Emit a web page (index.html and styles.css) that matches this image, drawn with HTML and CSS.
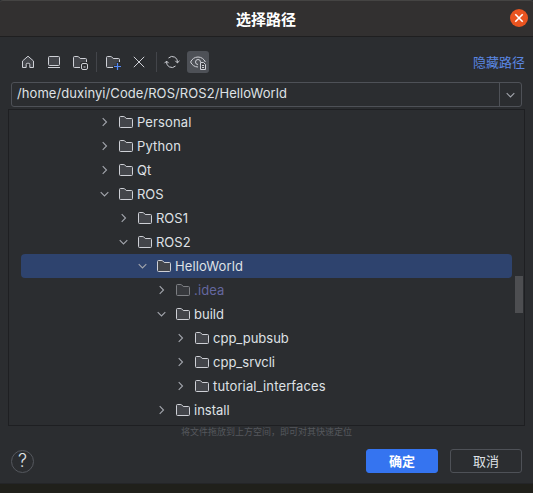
FILE: index.html
```html
<!DOCTYPE html>
<html lang="zh-CN">
<head>
<meta charset="utf-8">
<title>选择路径</title>
<link rel="stylesheet" href="styles.css">
</head>
<body>
<svg class="defs" width="0" height="0">
  <symbol id="folder" viewBox="0 0 16 16"><path class="body" d="M1.5 3.5a1 1 0 0 1 1-1h3.4a1 1 0 0 1 .75.34L8.2 4.5h5.3a1 1 0 0 1 1 1v7a1 1 0 0 1-1 1h-11a1 1 0 0 1-1-1z"/></symbol>
  <symbol id="right" viewBox="0 0 16 16"><path d="M6.7 4.2 10.5 8l-3.8 3.8"/></symbol>
  <symbol id="down" viewBox="0 0 16 16"><path d="M4.7 6.2 8.5 10l3.8-3.8"/></symbol>
</svg>
<div class="dialog">
  <header class="titlebar">
    <h1>选择路径</h1>
    <button class="close" aria-label="关闭"><svg width="18" height="18" viewBox="0 0 18 18"><path d="m5.3 5.3 7.4 7.4m0-7.4-7.4 7.4"/></svg></button>
  </header>
  <div class="toolbar">
    <span class="tool"><svg class="icon" viewBox="0 0 16 16"><path class="body" d="M2.5 7 8 2.2 13.5 7v6.5h-3.7v-3.2a1 1 0 0 0-1-1H7.2a1 1 0 0 0-1 1v3.2H2.5z"/></svg></span>
    <span class="tool"><svg class="icon" viewBox="0 0 16 16"><rect class="body" x="2.5" y="2.5" width="11" height="9" rx="1"/><path d="M2 13.5h12"/></svg></span>
    <span class="tool"><svg class="icon" viewBox="0 0 16 16"><path class="body" d="M8 13.5H2.5a1 1 0 0 1-1-1v-9a1 1 0 0 1 1-1h3.4a1 1 0 0 1 .75.34L8.2 4.5h5.3a1 1 0 0 1 1 1V8"/><rect class="cut" x="8" y="8" width="9" height="9" rx="2"/><rect x="9.5" y="9.5" width="6" height="6" rx="1.5"/><path d="M11.5 13h2"/></svg></span>
    <i class="separator"></i>
    <span class="tool"><svg class="icon" viewBox="0 0 16 16"><path class="body" d="M8 13.5H2.5a1 1 0 0 1-1-1v-9a1 1 0 0 1 1-1h3.4a1 1 0 0 1 .75.34L8.2 4.5h5.3a1 1 0 0 1 1 1V8"/><path class="cut" d="M11.5 8H16v8H8v-4.5h3.5z"/><path class="plus" d="M12.5 9v7M9 12.5h7"/></svg></span>
    <span class="tool"><svg class="icon" viewBox="0 0 16 16"><path d="m2.8 2.8 10.4 10.4m0-10.4L2.8 13.2"/></svg></span>
    <i class="separator second"></i>
    <span class="tool"><svg class="icon" viewBox="0 0 16 16"><path d="M4.5 4A5.3 5.3 0 0 1 13.4 8.8M11.5 12A5.3 5.3 0 0 1 2.6 7.2M.5 9.2l2.1-2.1 2.1 2.1M11.3 6.8l2.1 2.1 2.1-2.1"/></svg></span>
    <span class="tool active"><svg class="icon" viewBox="0 0 16 16"><path d="M8 13C4.5 13 2 11 .6 8 2 5 4.6 3 8 3s6 2 7.4 5M8 10.5A2.5 2.5 0 1 1 10.5 8"/><path class="page" d="M10.5 8.5h3l2 2v5h-5zM12 11.5h2M12 13.5h2"/></svg></span>
    <a class="hide">隐藏路径</a>
  </div>
  <div class="path"><span>/home/duxinyi/Code/ROS/ROS2/HelloWorld</span><b><svg class="arrow" viewBox="0 0 16 16"><use href="#down"/></svg></b></div>
  <div class="tree">
    <div class="row l0"><svg class="arrow"><use href="#right"/></svg><svg class="icon"><use href="#folder"/></svg><span class="wide">Personal</span></div>
    <div class="row l0"><svg class="arrow"><use href="#right"/></svg><svg class="icon"><use href="#folder"/></svg><span class="wide">Python</span></div>
    <div class="row l0"><svg class="arrow"><use href="#right"/></svg><svg class="icon"><use href="#folder"/></svg><span>Qt</span></div>
    <div class="row l0"><svg class="arrow"><use href="#down"/></svg><svg class="icon"><use href="#folder"/></svg><span>ROS</span></div>
    <div class="row l1"><svg class="arrow"><use href="#right"/></svg><svg class="icon"><use href="#folder"/></svg><span>ROS1</span></div>
    <div class="row l1"><svg class="arrow"><use href="#down"/></svg><svg class="icon"><use href="#folder"/></svg><span>ROS2</span></div>
    <div class="row l2 selected"><svg class="arrow"><use href="#down"/></svg><svg class="icon"><use href="#folder"/></svg><span class="wide">HelloWorld</span></div>
    <div class="row l3 hidden-dir"><svg class="arrow"><use href="#right"/></svg><svg class="icon"><use href="#folder"/></svg><span class="wide">.idea</span></div>
    <div class="row l3"><svg class="arrow"><use href="#down"/></svg><svg class="icon"><use href="#folder"/></svg><span>build</span></div>
    <div class="row l4"><svg class="arrow"><use href="#right"/></svg><svg class="icon"><use href="#folder"/></svg><span>cpp_pubsub</span></div>
    <div class="row l4"><svg class="arrow"><use href="#right"/></svg><svg class="icon"><use href="#folder"/></svg><span>cpp_srvcli</span></div>
    <div class="row l4"><svg class="arrow"><use href="#right"/></svg><svg class="icon"><use href="#folder"/></svg><span class="wide">tutorial_interfaces</span></div>
    <div class="row l3"><svg class="arrow"><use href="#right"/></svg><svg class="icon"><use href="#folder"/></svg><span>install</span></div>
    <i class="thumb"></i>
  </div>
  <p class="hint">将文件拖放到上方空间，即可对其快速定位</p>
  <footer>
    <button class="help">?</button>
    <button class="btn primary">确定</button>
    <button class="btn">取消</button>
  </footer>
</div>
</body>
</html>
```
FILE: styles.css
```css
* { box-sizing: border-box; }
body {
  margin: 0;
  height: 493px;
  overflow: hidden;
  background: #20201b;
  color: #dfe1e5;
  font: 13px/24px Inter, "Noto Sans CJK SC", sans-serif;
}
.defs { position: absolute; }
button { margin: 0; padding: 0; font: inherit; color: inherit; }
.dialog { height: 484px; background: #2b2d30; border-bottom: 1px solid #242528; }
.titlebar {
  position: relative;
  height: 37px;
  background: #323030;
  border-top: 1px solid #454443;
  border-bottom: 1px solid #1f1f20;
  border-radius: 3px 3px 0 0;
}
h1 { margin: 0; padding-right: 1px; padding-top: 1px; text-align: center; font-size: 15px; line-height: 35px; font-weight: 700; color: #fff; }
.close {
  position: absolute;
  right: 5px;
  top: 8px;
  width: 18px;
  height: 18px;
  border: 0;
  border-radius: 50%;
  background: #e95420;
}
.close svg { display: block; fill: none; stroke: #fff; stroke-width: 1.6; }
.icon, .arrow { width: 16px; height: 16px; flex: none; fill: none; stroke: #ced0d6; stroke-width: 1; display: block; overflow: visible; }
.arrow { stroke: #a3a6ad; stroke-width: 1.1; }
.body { fill: #43454a; }
.cut { fill: #2b2d30; stroke: none; }
.plus { stroke: #548af7; stroke-width: 1.2; }
.page { fill: #43454a; }
.toolbar { display: flex; align-items: center; height: 45px; padding: 4px 8px 0 17px; }
.tool { width: 22px; height: 22px; margin-right: 4px; display: grid; place-items: center; border-radius: 3px; }
.active { background: #4e5157; }
.separator { width: 1px; height: 20px; margin: 0 5px 0 1px; background: #43454a; }
.separator.second { margin: 0 4px 0 2px; }
.hide { margin-left: auto; color: #5a87e2; line-height: 20px; }
.path { display: flex; height: 25px; margin: 0 11px; border: 1px solid #4e5157; border-radius: 3px; line-height: 22px; }
.path span { flex: 1; padding-left: 5px; letter-spacing: .07px; margin-top: -1px; }
.path b { width: 22px; border-left: 1px solid #4e5157; display: grid; place-items: center; }
.path .arrow { margin-left: -1px; }
.tree { position: relative; height: 317px; margin: 2px 8px 0; border: 1px solid #1e1f22; }
.row { display: flex; align-items: center; height: 24px; margin: 0 12px; border-radius: 4px; }
.row .icon { margin: 0 3px 0 6px; }
.wide { letter-spacing: .13px; }
.l0 { padding-left: 75px; }
.l1 { padding-left: 94px; }
.l2 { padding-left: 113px; }
.l3 { padding-left: 132px; }
.l4 { padding-left: 151px; }
.selected { background: #2e436e; }
.hidden-dir { color: #64679f; }
.hidden-dir .icon { opacity: .5; }
.thumb { position: absolute; right: 1px; top: 166px; width: 8px; height: 37px; background: #4d4e51; }
.hint { margin: 0; text-align: center; font-size: 9px; line-height: 11px; color: #55585d; }
footer { display: flex; align-items: center; gap: 12px; height: 24px; margin: 12px 11px 0; }
.help { width: 23px; height: 23px; margin-right: auto; border: 1px solid #55585e; border-radius: 50%; background: none; font-size: 18px; font-weight: 300; line-height: 20px; }
.btn { width: 72px; height: 24px; border: 1px solid #4e5157; border-radius: 3px; background: none; line-height: 22px; }
.primary { background: #3574f0; border-color: #3574f0; color: #fff; font-weight: 700; }
```
